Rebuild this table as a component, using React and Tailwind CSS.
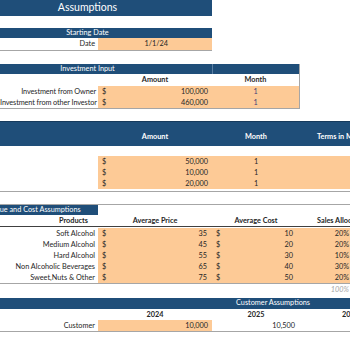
import React from "react";

const navy = "bg-[#1f4e79]";
const orange = "bg-[#fdca96]";

const Row = ({ children, className = "" }) => (
    <div className={`flex h-[11px] items-center leading-none ${className}`}>{children}</div>
);

const Money = ({ value, width = "w-[114px]", pr = "pr-[4px]" }) => (
    <div className={`flex ${width} h-full shrink-0 items-center justify-between pl-[4px] ${pr}`}>
        <span>$</span>
        <span>{value}</span>
    </div>
);

export default function App() {
    const products = [
        ["Soft Alcohol", "35", "10", "20%"],
        ["Medium Alcohol", "45", "20", "20%"],
        ["Hard Alcohol", "55", "30", "10%"],
        ["Non Alcoholic Beverages", "65", "40", "30%"],
        ["Sweet,Nuts & Other", "75", "50", "20%"],
    ];

    return (
        <div
            className="h-[350px] w-[350px] overflow-hidden bg-white text-[7.3px] text-[#262626]"
            style={{ fontFamily: "Lato, 'Open Sans', sans-serif" }}
        >
            {/* title */}
            <div className={`${navy} flex h-[16px] w-[212px] items-center`}>
                <span className="w-[175px] shrink-0 text-center text-[10.5px] text-white">Assumptions</span>
            </div>

            {/* starting date */}
            <div className="mt-[12px] w-[212px] border-b border-[#a6a6a6]">
                <div className={`${navy} flex h-[10px] items-center`}>
                    <span className="w-[175px] shrink-0 text-center text-white">Starting Date</span>
                </div>
                <Row className="h-[12px]">
                    <div className="w-[98px] shrink-0 pr-[3px] text-right">Date</div>
                    <div className={`${orange} h-full flex-1`}>
                        <div className="flex h-full w-[70px] items-center justify-end">1/1/24</div>
                    </div>
                </Row>
            </div>

            {/* investment input */}
            <div className="mt-[13px] w-[300px] border-r border-b border-[#a6a6a6]">
                <div className={`${navy} flex h-[10px] items-center text-white`}>
                    <span className="w-[175px] shrink-0 text-center">Investment Input</span>
                    <div className="ml-[37px] h-full border-l border-[#5b7fa3]" />
                </div>
                <Row className="h-[12px] font-bold">
                    <div className="w-[98px] shrink-0" />
                    <div className="w-[114px] shrink-0 text-center">Amount</div>
                    <div className="flex-1 text-center">Month</div>
                </Row>
                {[
                    ["Investment from Owner", "100,000"],
                    ["Investment from other Investor", "460,000"],
                ].map(([label, value]) => (
                    <Row key={label}>
                        <div className="w-[98px] shrink-0 whitespace-nowrap pr-[2px] text-right tracking-[-0.1px]">
                            {label}
                        </div>
                        <div className={`${orange} flex h-full flex-1`}>
                            <Money value={value} />
                            <div className="flex-1 text-center leading-[11px] text-[#3f3f76]">1</div>
                        </div>
                    </Row>
                ))}
            </div>

            {/* loans */}
            <div className="mt-[12px] border-b border-[#a6a6a6]">
                <div className={`${navy} flex h-[25px] items-end border-t border-[#163a5c] pb-[3px] font-bold text-white`}>
                    <div className="w-[98px] shrink-0" />
                    <div className="w-[114px] shrink-0 text-center">Amount</div>
                    <div className="w-[88px] shrink-0 text-center">Month</div>
                    <div className="min-w-0 flex-1 overflow-hidden whitespace-nowrap pl-[17px]">Terms in Months</div>
                </div>
                <div className="h-[10px]" />
                <div className="pb-[2px]">
                    {["50,000", "10,000", "20,000"].map((v) => (
                        <Row key={v}>
                            <div className="w-[98px] shrink-0" />
                            <div className={`${orange} flex h-full flex-1`}>
                                <Money value={v} />
                                <div className="w-[88px] shrink-0 text-center leading-[11px]">1</div>
                                <div className="flex-1" />
                            </div>
                        </Row>
                    ))}
                </div>
            </div>

            {/* revenue and cost */}
            <div className="mt-[12px] border-t border-[#a6a6a6]">
                <div className={`${navy} flex h-[10px] w-[98px] items-center overflow-hidden whitespace-nowrap text-white`}>
                    <span className="-ml-[20px] shrink-0">Revenue and Cost Assumptions</span>
                </div>
                <Row className="h-[12px] border-b border-[#404040] font-bold">
                    <div className="w-[98px] shrink-0 pr-[10px] text-right">Products</div>
                    <div className="w-[114px] shrink-0 text-center">Average Price</div>
                    <div className="w-[88px] shrink-0 text-center">Average Cost</div>
                    <div className="min-w-0 flex-1 overflow-hidden whitespace-nowrap pl-[17px]">Sales Allocation</div>
                </Row>
                <div className="mt-[1px] border-b border-[#a6a6a6]">
                    {products.map(([name, price, cost, pct]) => (
                        <Row key={name} className="h-[11.4px]">
                            <div className="w-[98px] shrink-0 whitespace-nowrap pr-[3px] text-right">{name}</div>
                            <div className={`${orange} flex h-full flex-1`}>
                                <Money value={price} pr="pr-[5px]" />
                                <Money value={cost} width="w-[88px]" pr="pr-[7px]" />
                                <div className="flex-1 pr-[1px] text-right leading-[11px]">{pct}</div>
                            </div>
                        </Row>
                    ))}
                </div>
                <Row className="h-[12px] justify-end pr-[1px] italic text-[#a6a6a6]">100%</Row>
            </div>

            {/* customers */}
            <div className="mt-[2px] border-b border-[#a6a6a6]">
                <div className={`${navy} flex h-[11px] items-center text-white`}>
                    <div className="w-[212px] shrink-0" />
                    <div className="w-[122px] shrink-0 text-center">Customer Assumptions</div>
                </div>
                <Row className="font-bold">
                    <div className="w-[98px] shrink-0" />
                    <div className="w-[114px] shrink-0 text-center">2024</div>
                    <div className="w-[88px] shrink-0 text-center">2025</div>
                    <div className="min-w-0 flex-1 overflow-hidden whitespace-nowrap pl-[42px]">2026</div>
                </Row>
                <Row>
                    <div className="w-[98px] shrink-0 pr-[3px] text-right">Customer</div>
                    <div className={`${orange} flex h-full w-[114px] shrink-0 items-center justify-end pr-[4px]`}>10,000</div>
                    <div className="w-[88px] shrink-0 pr-[5px] text-right">10,500</div>
                    <div className="flex-1" />
                </Row>
            </div>
        </div>
    );
}
